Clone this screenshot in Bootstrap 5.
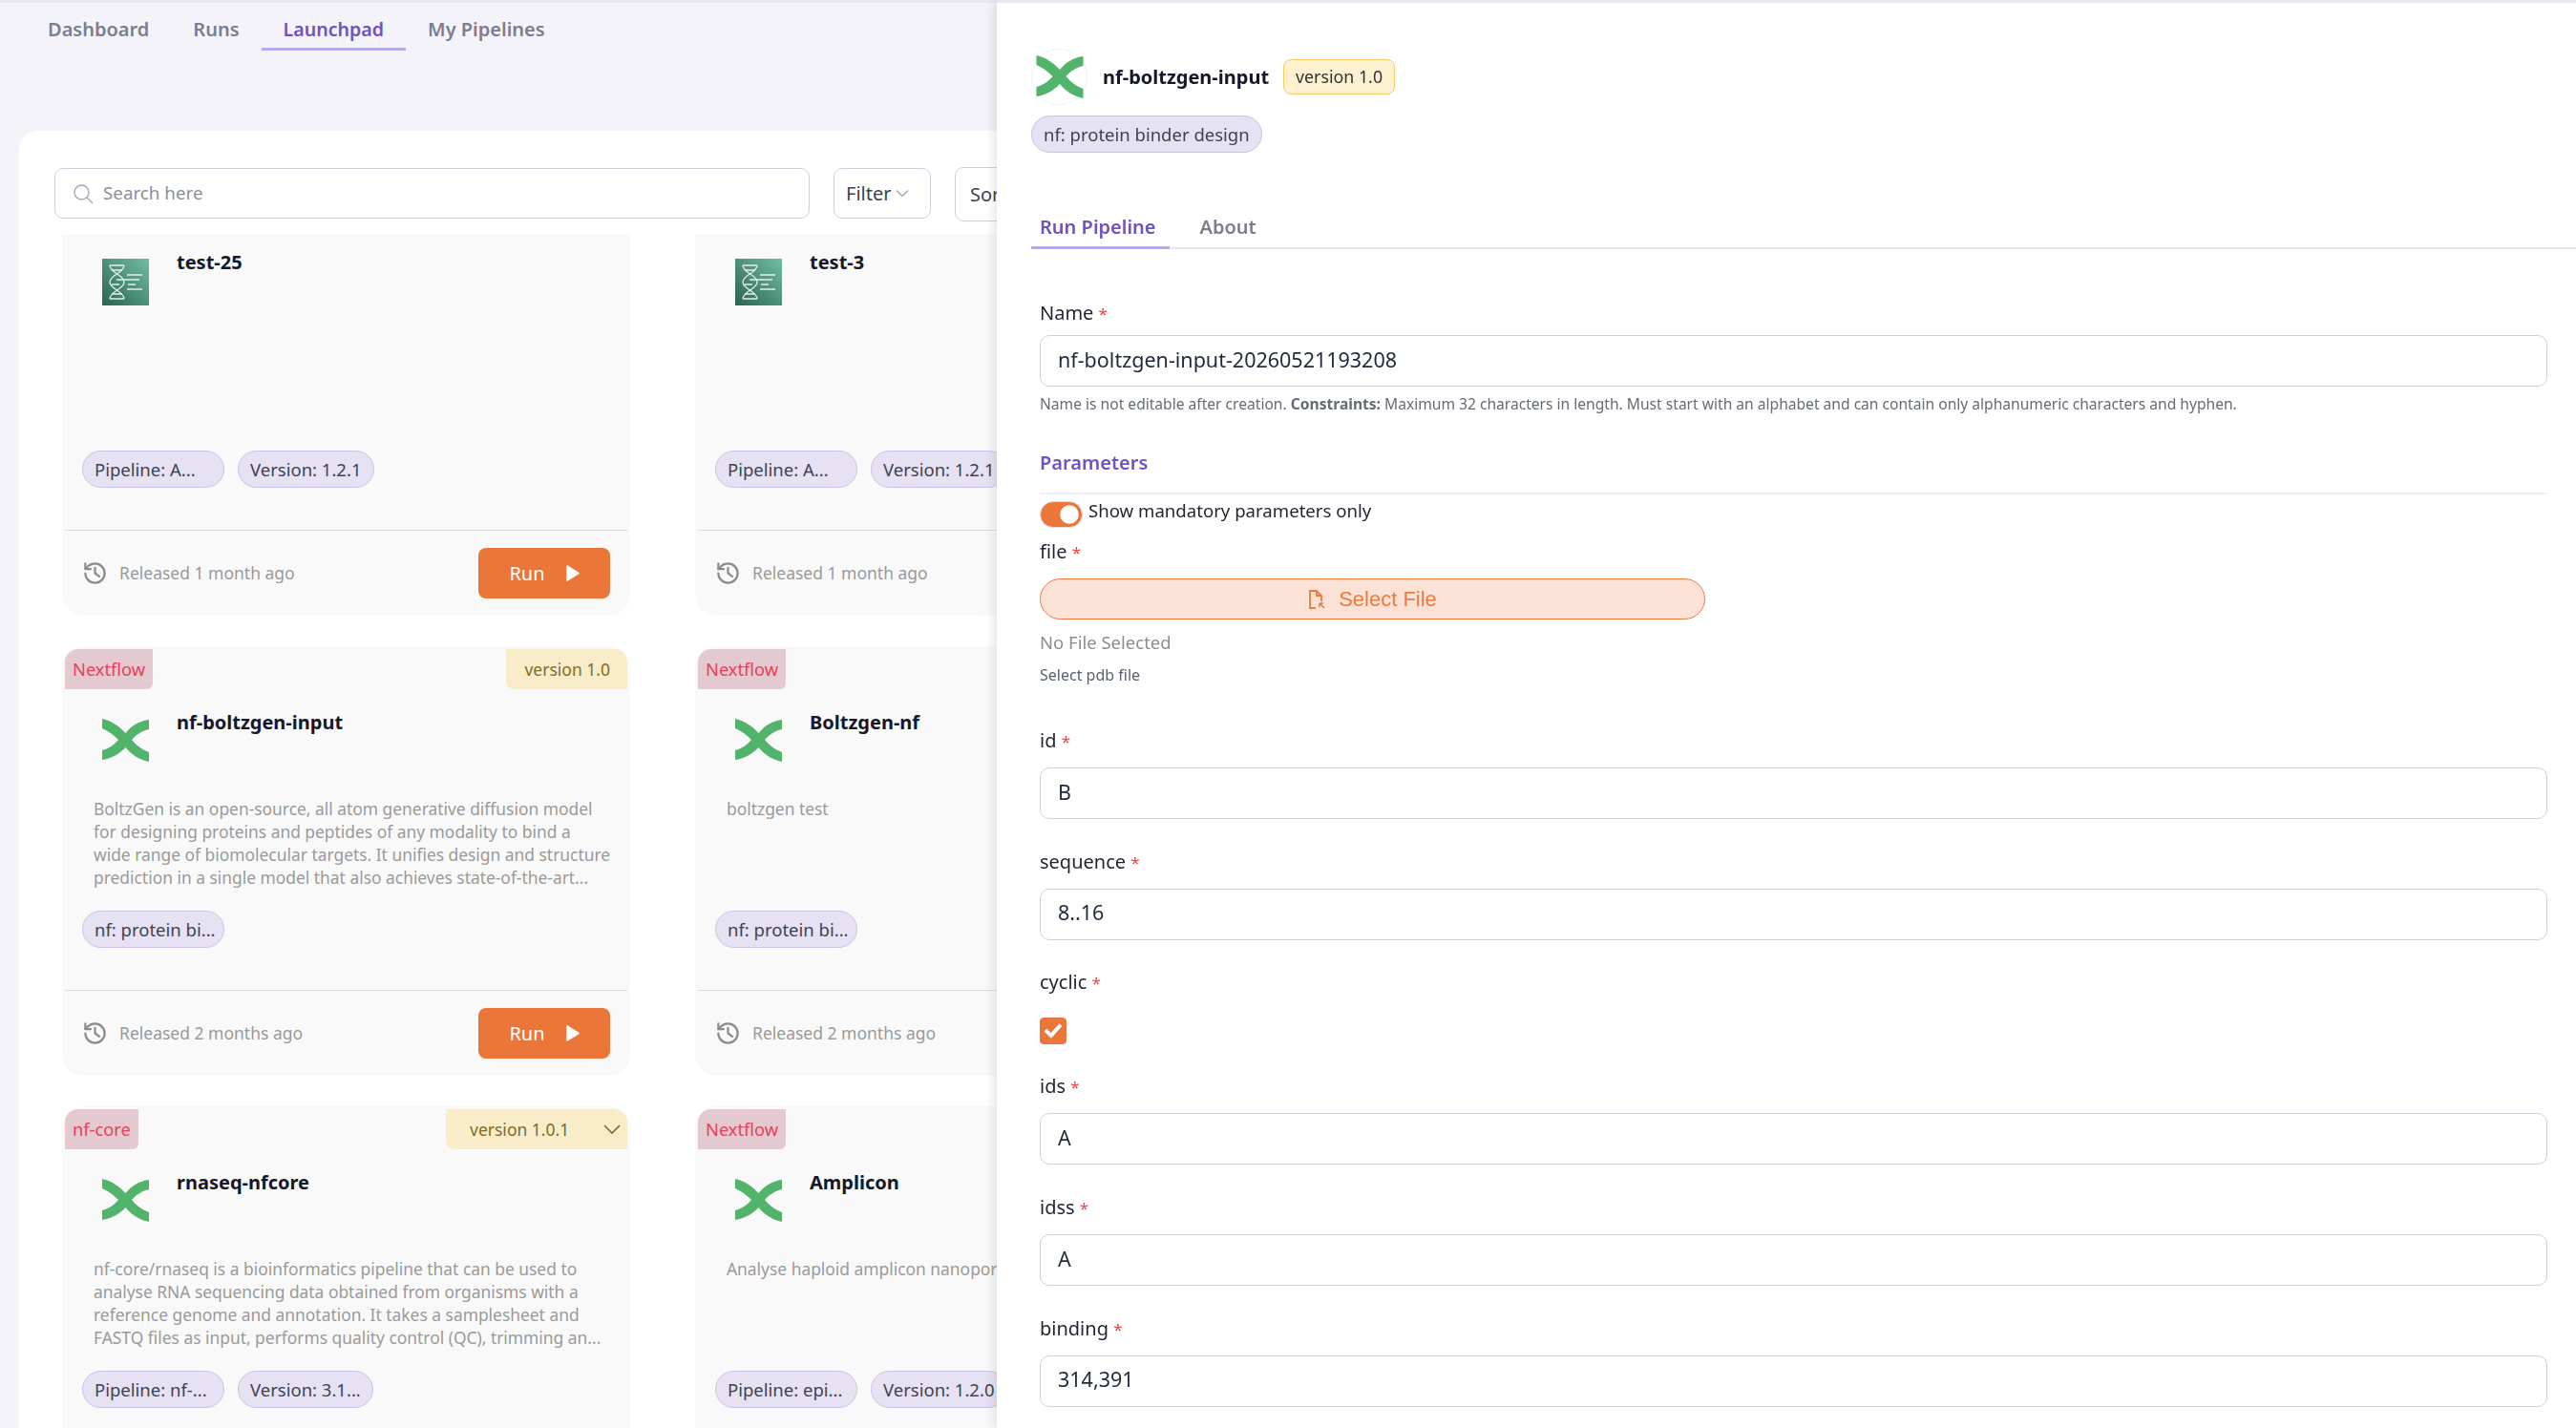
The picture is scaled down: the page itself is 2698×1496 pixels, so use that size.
<!DOCTYPE html>
<html lang="en">

<head>
    <meta charset="UTF-8">
    <meta name="viewport" content="width=device-width, initial-scale=1.0">
    <title>Launchpad</title>
    <link href="https://cdn.jsdelivr.net/npm/bootstrap@5.3.0/dist/css/bootstrap.min.css" rel="stylesheet">
    <style>
        html, body {
            height: 1496px;
            overflow: hidden;
        }

        body {
            background: #f4f3f9;
            font-family: "Noto Sans", "Lato", sans-serif;
            font-size: 20px;
            color: #1f2430;
            border-top: 3px solid #e9e8f2;
        }

        /* top tabs */
        .top-tabs {
            padding-left: 27px;
            height: 50px;
        }

        .top-tabs .nav-link,
        .drawer-tabs .nav-link {
            font-size: 20px;
            line-height: 24px;
            font-weight: 600;
            color: #7b7e8e;
            background: none;
            border: 0;
            border-bottom: 3px solid transparent;
            border-radius: 0;
        }

        .top-tabs .nav-link {
            padding: 16px 23px 7px;
        }

        .top-tabs .nav-link.active,
        .drawer-tabs .nav-link.active {
            color: #6f52c0;
            border-bottom-color: #b9a9e8;
        }

        .top-tabs .nav-link.active {
            font-size: 19.6px;
        }

        /* white panel */
        .main-panel {
            margin: 84px 0 0 20px;
            background: #fff;
            border-radius: 20px 0 0 0;
            padding: 39px 0 0 37px;
            height: 1400px;
        }

        .tool-row {
            column-gap: 25px;
        }

        .tool-box {
            height: 53px;
            background: #fff;
            border: 1px solid #ccd2dc;
            border-radius: 9px;
        }

        .search-box {
            width: 791px;
            padding: 0 18px;
            gap: 10px;
            color: #8b8f9b;
            font-size: 18.8px;
        }

        .filter-btn {
            width: 102px;
            padding: 0 12px;
            gap: 5px;
            font-size: 20px;
            color: #3c4250;
        }

        .sort-btn {
            width: 120px;
            height: 57px;
            margin-top: -1px;
            padding: 0 15px;
            font-size: 20px;
            color: #3c4250;
        }

        /* cards, scrolled by 50px inside their area */
        .card-scroll {
            margin: 13px 0 0 8px;
            height: 1251px;
            overflow: hidden;
        }

        .card-grid {
            display: grid;
            grid-template-columns: 595px 595px;
            column-gap: 68px;
            row-gap: 32px;
            margin-top: -50px;
        }

        .pipe-card {
            height: 450px;
            background: #f9f9f9;
            border: 0;
            border-radius: 22px;
            overflow: hidden;
        }

        .ribbon-row {
            margin: 3px 3px 0;
            height: 42px;
        }

        .ribbon-type {
            height: 42px;
            padding: 0 8px;
            background: #e4c9d0;
            color: #e8405a;
            font-size: 18.3px;
            line-height: 42px;
            border-radius: 14px 0 6px 0;
        }

        .ribbon-ver {
            height: 42px;
            padding: 0 18px 0 19px;
            background: #f8ecc9;
            color: #7d6c28;
            font-size: 17.5px;
            line-height: 42px;
            border-radius: 0 14px 0 8px;
        }

        .ribbon-ver.has-menu {
            width: 190px;
            padding: 0 7px 0 25px;
        }

        .card-head {
            margin: 23px 0 0 42px;
        }

        .card-head svg {
            margin-top: 8px;
            flex: none;
        }

        .card-title-text {
            margin-left: 29px;
            font-size: 20px;
            line-height: 24px;
            font-weight: 700;
            color: #14182a;
        }

        .card-desc {
            margin: 37px 0 0 33px;
            height: 96px;
            font-size: 17.4px;
            line-height: 24px;
            color: #9a9a9a;
            white-space: nowrap;
        }

        .tag-row {
            margin: 23px 0 0 21px;
            height: 39px;
            gap: 14px;
        }

        .tag-pill {
            display: inline-block;
            background: #e6e2f3;
            border: 1px solid #c9c2e8;
            border-radius: 20px;
            color: #3f4350;
            font-size: 18.5px;
            line-height: 37px;
            padding: 0 12px;
            white-space: nowrap;
        }

        .tag-row .tag-pill:first-child {
            width: 149px;
            padding-right: 0;
        }

        .card-rule {
            margin: 44px 3px 0;
            border-top: 1px solid #dcdce0;
        }

        .card-foot {
            margin: 18px 21px 0;
            height: 53px;
        }

        .released {
            gap: 12px;
            font-size: 17.5px;
            color: #999;
        }

        .run-btn {
            width: 138px;
            height: 53px;
            background: #ea763a;
            border: 0;
            border-radius: 8px;
            color: #fff;
            font-size: 20px;
            gap: 22px;
        }

        /* drawer */
        .drawer {
            --bs-offcanvas-width: 1654px;
            --bs-offcanvas-border-width: 0;
            border-top: 3px solid #e9e8f2;
            box-shadow: -3px 0 10px rgba(40, 40, 60, .12);
            padding: 48px 0 0 36px;
        }

        .logo-ring {
            width: 59px;
            height: 59px;
            border: 1px solid #f0f0f2;
            border-radius: 50%;
            flex: none;
        }

        .drawer-title {
            margin-left: 16px;
            font-size: 20px;
            font-weight: 700;
            color: #14182a;
        }

        .drawer-ver {
            margin-left: 15px;
            height: 37px;
            padding: 0 12px;
            background: #fdf1cf;
            border: 1px solid #f6cd66;
            border-radius: 8px;
            font-size: 17.8px;
            line-height: 35px;
            color: #333;
        }

        .drawer-pill {
            margin-top: 11px;
        }

        .drawer-tabs {
            margin-top: 56px;
            height: 45px;
            border-bottom: 2px solid #e6e6ec;
        }

        .drawer-tabs .nav-link {
            padding: 10px 14px 8px 9px;
            height: 45px;
        }

        .drawer-tabs .nav-item + .nav-item {
            margin-left: 23px;
        }

        .run-form {
            margin: 55px 0 0 9px;
            width: 1579px;
        }

        .field-label {
            display: block;
            font-size: 20px;
            line-height: 24px;
            margin-bottom: 16px;
            color: #1f2430;
        }

        .name-label {
            margin-bottom: 11px;
        }

        .req {
            color: #f0403c;
            font-size: 17px;
            line-height: 1;
        }

        .field-input {
            height: 54px;
            padding: 0 18px 4px;
            font-size: 21.5px;
            color: #1f2a3c;
            border: 1px solid #ccd2dc;
            border-radius: 10px;
        }

        .field-gap {
            margin-bottom: 32.7px;
        }

        .help-text {
            margin-top: 8px;
            font-size: 15.6px;
            line-height: 20px;
            color: #666b75;
        }

        .params-head {
            margin-top: 40px;
            padding-bottom: 19px;
            border-bottom: 2px solid #efeff3;
            font-size: 20px;
            line-height: 24px;
            font-weight: 600;
            color: #6f52c0;
        }

        .toggle-row {
            margin: 7px 0 13px;
            height: 28px;
            min-height: 0;
            padding: 0;
        }

        .toggle-row .form-check-input {
            width: 45px;
            height: 28px;
            margin: 0;
            float: none;
            flex: none;
            background-color: #ea763a;
            border-color: #e3dfe9;
        }

        .toggle-row label {
            margin: -2px 0 0 6px;
            font-size: 18.6px;
            line-height: 24px;
            color: #1f2430;
        }

        .select-file {
            width: 697px;
            height: 43px;
            gap: 14px;
            background: #fce2d6;
            border: 1px solid #ee7a3a;
            border-radius: 22px;
            color: #ec7a3f;
            font-family: "Liberation Sans", sans-serif;
            font-size: 22px;
        }

        .no-file {
            margin-top: 12px;
            font-size: 18.5px;
            line-height: 24px;
            color: #8a8d94;
        }

        .file-hint {
            margin: 12px 0 47px;
            font-size: 16px;
            line-height: 20px;
            color: #59616e;
        }

        .check-label {
            margin-bottom: 0;
        }

        .check-field {
            margin: 25px 0 32px;
            height: 28px;
        }

        .check-field .form-check-input {
            display: block;
            width: 28px;
            height: 28px;
            margin: 0;
            border-radius: 4px;
            background-color: #ea763a;
            border-color: #ea763a;
            background-size: 22px;
            background-image: url("data:image/svg+xml,%3csvg xmlns='http://www.w3.org/2000/svg' viewBox='0 0 20 20'%3e%3cpath fill='none' stroke='%23fff' stroke-linecap='square' stroke-width='3.6' d='M4 10.5l4 4 8-9'/%3e%3c/svg%3e");
        }
    </style>
</head>

<body>

    <!-- Top tabs -->
    <ul class="nav top-tabs">
        <li class="nav-item"><a class="nav-link" href="#">Dashboard</a></li>
        <li class="nav-item"><a class="nav-link" href="#">Runs</a></li>
        <li class="nav-item"><a class="nav-link active" href="#">Launchpad</a></li>
        <li class="nav-item"><a class="nav-link" href="#">My Pipelines</a></li>
    </ul>

    <div class="main-panel">
        <!-- Search and filters -->
        <div class="d-flex tool-row">
            <div class="tool-box search-box d-flex align-items-center">
                <svg width="22" height="22" viewBox="0 0 22 22" fill="none" stroke="#a4a9b4" stroke-width="1.4">
                    <circle cx="9.5" cy="9.5" r="7.5" />
                    <path d="M15 15l6 6" />
                </svg>
                <span>Search here</span>
            </div>
            <div class="tool-box filter-btn d-flex align-items-center">
                <span>Filter</span>
                <svg width="14" height="9" viewBox="0 0 14 9" fill="none" stroke="#9aa0ac" stroke-width="1.2">
                    <path d="M1 1.5l6 6 6-6" />
                </svg>
            </div>
            <div class="tool-box sort-btn d-flex align-items-center gap-2">
                <span>Sort</span>
            </div>
        </div>

        <!-- Pipeline cards -->
        <div class="card-scroll">
            <div class="card-grid" id="cardGrid"></div>
        </div>
    </div>

    <!-- Run pipeline drawer -->
    <div class="offcanvas offcanvas-end show drawer" tabindex="-1" data-bs-backdrop="false" data-bs-scroll="true">
        <div class="d-flex align-items-center">
            <div class="logo-ring d-flex align-items-center justify-content-center">
                <svg width="50" height="45" viewBox="0 0 49 45"><use href="#nfLogo" /></svg>
            </div>
            <span class="drawer-title">nf-boltzgen-input</span>
            <span class="drawer-ver">version 1.0</span>
        </div>
        <div class="d-flex"><span class="tag-pill drawer-pill">nf: protein binder design</span></div>

        <ul class="nav drawer-tabs">
            <li class="nav-item"><a class="nav-link active" href="#">Run Pipeline</a></li>
            <li class="nav-item"><a class="nav-link" href="#">About</a></li>
        </ul>

        <form class="run-form">
            <label class="field-label name-label">Name <span class="req">*</span></label>
            <input class="form-control field-input" type="text" value="nf-boltzgen-input-20260521193208">
            <div class="help-text">Name is not editable after creation. <b>Constraints:</b> Maximum 32 characters in length. Must start with an alphabet and can contain only alphanumeric characters and hyphen.</div>

            <div class="params-head">Parameters</div>

            <div class="form-check form-switch toggle-row d-flex align-items-start">
                <input class="form-check-input" type="checkbox" role="switch" id="mandatoryOnly" checked>
                <label for="mandatoryOnly">Show mandatory parameters only</label>
            </div>

            <label class="field-label">file <span class="req">*</span></label>
            <button type="button" class="btn select-file d-flex align-items-center justify-content-center">
                <svg width="18" height="22" viewBox="0 0 18 22" fill="none" stroke="#ec7a3f" stroke-width="1.8">
                    <path d="M8 20H2V2h7l5 5v6" />
                    <path d="M9 2v5h5" />
                    <path d="M12 15l5 5M12 15h4M12 15v4" stroke-width="1.5" />
                </svg>
                <span>Select File</span>
            </button>
            <div class="no-file">No File Selected</div>
            <div class="file-hint">Select pdb file</div>

            <div id="paramFields"></div>
        </form>
    </div>

    <!-- Shared logo shapes -->
    <svg width="0" height="0" class="position-absolute">
        <defs>
            <path id="nfLogo" fill="#52b36a" d="M0 0C10 2 18 8 24.5 15C30 8 39 2 49 1V11C41 13 35 17 31 22C35 27 41 32 49 35V45C39 43 30 37 24.5 30C18 37 9 42 0 43V33C7 31 13 27 17 22C12 17 7 13 0 10Z" />
            <linearGradient id="dnaBg" x1="0" y1="1" x2="1" y2="0">
                <stop offset="0" stop-color="#2a6452" />
                <stop offset="1" stop-color="#72bda2" />
            </linearGradient>
            <g id="dnaTile">
                <rect width="49" height="49" fill="url(#dnaBg)" />
                <g fill="none" stroke="#e4efe9" stroke-width="1.3">
                    <path d="M8 7C8 15 23 17 23 24.5C23 32 8 34 8 42" />
                    <path d="M23 7C23 15 8 17 8 24.5C8 32 23 34 23 42" />
                    <path d="M8 7H23M10 12H21M10 37H21M8 42H23M10 27H18" />
                    <path d="M26 17H42M15 22H39M27 27H35M26 32H42" />
                </g>
            </g>
        </defs>
    </svg>

    <script>
        // foot: false on the last row, its footer lies below the fold
        const pipelines = [
            { title: "test-25", icon: "dna", tags: ["Pipeline: A...", "Version: 1.2.1"], released: "1 month ago", lines: [] },
            { title: "test-3", icon: "dna", tags: ["Pipeline: A...", "Version: 1.2.1"], released: "1 month ago", lines: [] },
            {
                title: "nf-boltzgen-input", type: "Nextflow", version: "version 1.0", tags: ["nf: protein bi..."], released: "2 months ago",
                lines: ["BoltzGen is an open-source, all atom generative diffusion model", "for designing proteins and peptides of any modality to bind a", "wide range of biomolecular targets. It unifies design and structure", "prediction in a single model that also achieves state-of-the-art..."]
            },
            { title: "Boltzgen-nf", type: "Nextflow", version: "version 1.0", tags: ["nf: protein bi..."], released: "2 months ago", lines: ["boltzgen test"] },
            {
                title: "rnaseq-nfcore", type: "nf-core", version: "version 1.0.1", menu: true, tags: ["Pipeline: nf-...", "Version: 3.1..."], foot: false,
                lines: ["nf-core/rnaseq is a bioinformatics pipeline that can be used to", "analyse RNA sequencing data obtained from organisms with a", "reference genome and annotation. It takes a samplesheet and", "FASTQ files as input, performs quality control (QC), trimming an..."]
            },
            { title: "Amplicon", type: "Nextflow", version: "version 1.0", tags: ["Pipeline: epi...", "Version: 1.2.0"], foot: false, lines: ["Analyse haploid amplicon nanopore sequencing data"] }
        ];

        // Fill the card grid
        document.getElementById("cardGrid").innerHTML = pipelines.map(p => `
            <div class="card pipe-card">
                <div class="ribbon-row d-flex justify-content-between">
                    ${p.type ? `<span class="ribbon-type">${p.type}</span>` : "<span></span>"}
                    ${p.version ? `<span class="ribbon-ver ${p.menu ? "has-menu d-flex justify-content-between align-items-center" : ""}">${p.version}${p.menu ? '<svg width="18" height="11" viewBox="0 0 18 11" fill="none" stroke="#7d6c28" stroke-width="1.6"><path d="M1 1l8 8 8-8"/></svg>' : ""}</span>` : ""}
                </div>
                <div class="card-head d-flex align-items-start">
                    ${p.icon === "dna"
                        ? '<svg width="49" height="49" viewBox="0 0 49 49"><use href="#dnaTile"/></svg>'
                        : '<svg width="49" height="45" viewBox="0 0 49 45"><use href="#nfLogo"/></svg>'}
                    <span class="card-title-text">${p.title}</span>
                </div>
                <div class="card-desc" ${p.icon === "dna" ? 'style="margin-top:33px"' : ""}>${p.lines.join("<br>")}</div>
                <div class="tag-row d-flex">${p.tags.map(t => `<span class="tag-pill">${t}</span>`).join("")}</div>
                ${p.foot === false ? "" : `<div class="card-rule"></div>
                <div class="card-foot d-flex justify-content-between align-items-center">
                    <span class="released d-flex align-items-center">
                        <svg width="27" height="27" viewBox="0 0 24 24" fill="none" stroke="#8c8c8c" stroke-width="2" stroke-linecap="round" stroke-linejoin="round">
                            <path d="M3 12a9 9 0 1 0 9-9 9.75 9.75 0 0 0-6.74 2.74L3 8" />
                            <path d="M3 3v5h5" />
                            <path d="M12 7v5l4 3" />
                        </svg>
                        Released ${p.released}
                    </span>
                    <button type="button" class="btn run-btn d-flex align-items-center justify-content-center">
                        <span>Run</span>
                        <svg width="14" height="17" viewBox="0 0 14 17"><path fill="#fff" stroke="#fff" stroke-width="1.5" stroke-linejoin="round" d="M1 1l12 7.5L1 16z" /></svg>
                    </button>
                </div>`}
            </div>`).join("");

        // Mandatory parameters of the selected pipeline
        const params = [
            { name: "id", value: "B" },
            { name: "sequence", value: "8..16" },
            { name: "cyclic", check: true },
            { name: "ids", value: "A" },
            { name: "idss", value: "A" },
            { name: "binding", value: "314,391" }
        ];

        document.getElementById("paramFields").innerHTML = params.map(f => `
            <label class="field-label ${f.check ? "check-label" : ""}">${f.name} <span class="req">*</span></label>
            ${f.check
                ? '<div class="check-field"><input class="form-check-input" type="checkbox" checked></div>'
                : `<input class="form-control field-input field-gap" type="text" value="${f.value}">`}`).join("");
    </script>

    <script src="https://cdn.jsdelivr.net/npm/bootstrap@5.3.0/dist/js/bootstrap.bundle.min.js"></script>
</body>

</html>
